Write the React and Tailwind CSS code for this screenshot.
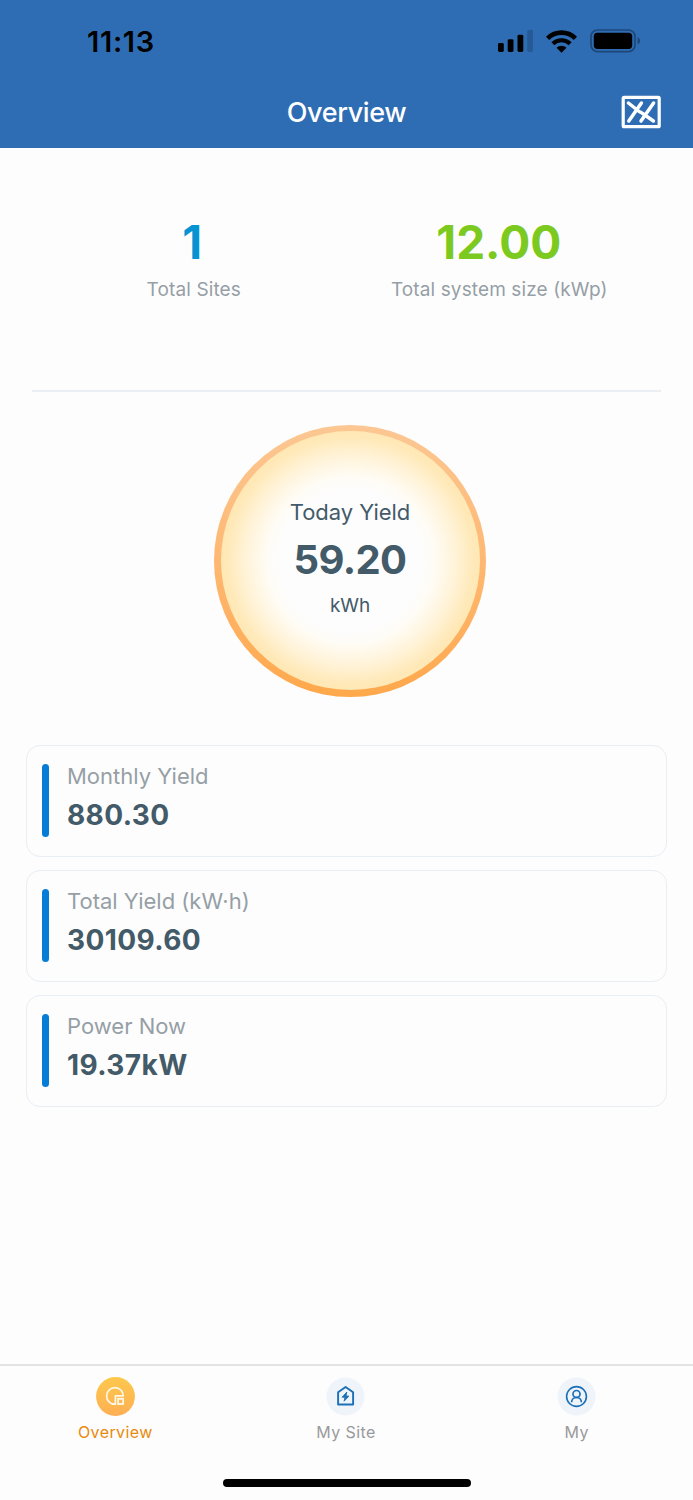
import React, { useState } from 'react';

const stats = [
  { id: 'sites', value: '1', label: 'Total Sites', valueClass: 'text-[#0593d3] -ml-[3px]' },
  { id: 'size', value: '12.00', label: 'Total system size (kWp)', valueClass: 'text-[#7cc91f] -ml-px' },
];

const yields = [
  { id: 'month', label: 'Monthly Yield', value: '880.30' },
  { id: 'total', label: 'Total Yield (kW·h)', value: '30109.60' },
  { id: 'power', label: 'Power Now', value: '19.37kW' },
];

function SignalIcon() {
  return (
    <svg width="35" height="22" viewBox="0 0 35 22">
      <rect x="0" y="13" width="5.8" height="9" rx="1.4" />
      <rect x="9.7" y="9.3" width="5.8" height="12.7" rx="1.4" />
      <rect x="19.5" y="4.8" width="5.8" height="17.2" rx="1.4" />
      <rect x="29.2" y="0" width="5.8" height="22" rx="1.4" fill="#255a96" />
    </svg>
  );
}

function WifiIcon() {
  return (
    <svg width="31" height="23" viewBox="0 0 31 23">
      <path d="M1.6 8.4a19.6 19.6 0 0 1 27.8 0" fill="none" stroke="#000" strokeWidth="4.6" />
      <path d="M6.9 13.8a12.2 12.2 0 0 1 17.2 0" fill="none" stroke="#000" strokeWidth="4.2" />
      <path d="M15.5 22.8l-5-5a7.1 7.1 0 0 1 10 0z" />
    </svg>
  );
}

function BatteryIcon() {
  return (
    <svg width="51" height="24" viewBox="0 0 51 24">
      <rect x="1" y="1" width="44" height="21.6" rx="6.6" fill="none" stroke="#1d4778" strokeWidth="1.7" />
      <rect x="3.8" y="3.7" width="38.4" height="16.2" rx="3.6" />
      <path d="M47.6 8.2c3.2 1.2 3.2 6 0 7.2z" fill="#1d4778" />
    </svg>
  );
}

function BoardIcon() {
  return (
    <svg width="40" height="34" viewBox="0 0 40 34" fill="none" stroke="#fff" strokeLinecap="round">
      <rect x="2.2" y="2.3" width="36" height="29.4" rx="1" strokeWidth="3.2" />
      <path d="M7.4 8L18.8 17M20 17.4L32.4 26M20.4 8L7.8 26M32.6 8L20 26" strokeWidth="3.5" />
    </svg>
  );
}

function OverviewIcon() {
  return (
    <svg width="39" height="39" viewBox="0 0 39 39" fill="none">
      <defs>
        <linearGradient id="tabFill" x1="0" y1="0" x2="0" y2="1">
          <stop offset="0" stopColor="#fdc84c" />
          <stop offset="1" stopColor="#feaf54" />
        </linearGradient>
      </defs>
      <circle cx="19.5" cy="19.5" r="19.4" fill="url(#tabFill)" />
      <path d="M18.9 27.2A8.3 8.3 0 1 1 27.2 18.8H19.4V27.2z" stroke="#fff8e7" strokeWidth="1.7" strokeLinejoin="round" />
      <rect x="22.1" y="21.8" width="5" height="5.2" stroke="#fff8e7" strokeWidth="1.8" />
    </svg>
  );
}

function SiteIcon() {
  return (
    <svg width="39" height="39" viewBox="0 0 39 39" fill="none">
      <circle cx="19.5" cy="19.5" r="19" fill="#eff3fa" />
      <path d="M12.1 15.3l7.5-5.4 7.5 5.4v12.2H12.1z" stroke="#1c70b8" strokeWidth="1.9" strokeLinejoin="round" />
      <path d="M20.8 15.1l-4.7 5.1h2.9l-.9 4 4.8-5.1h-2.9z" fill="#1c70b8" stroke="#1c70b8" strokeWidth=".9" />
    </svg>
  );
}

function UserIcon() {
  return (
    <svg width="39" height="39" viewBox="0 0 39 39" fill="none" stroke="#1c70b8">
      <circle cx="19.5" cy="19.5" r="19" fill="#eff3fa" stroke="none" />
      <circle cx="19.5" cy="19.5" r="9.9" strokeWidth="1.6" />
      <circle cx="19.5" cy="17" r="3.5" strokeWidth="1.7" />
      <path d="M14.6 25.2a4.9 4.9 0 0 1 9.8 0" strokeWidth="1.7" />
    </svg>
  );
}

const tabs = [
  { id: 'overview', label: 'Overview', icon: <OverviewIcon /> },
  { id: 'site', label: 'My Site', icon: <SiteIcon /> },
  { id: 'my', label: 'My', icon: <UserIcon /> },
];

export default function App() {
  const [activeTab, setActiveTab] = useState('overview');

  return (
    <div className="w-[693px] h-[1500px] flex flex-col bg-[#fdfdfd] overflow-hidden font-['Inter',sans-serif]">
      <header className="h-[148px] shrink-0 bg-[#2e6db4]">
        {/* Status bar */}
        <div className="h-[82px] pl-[87px] pr-[52px] flex items-center justify-between">
          <span className="text-[29px] leading-none tracking-[0.7px] font-semibold text-black">11:13</span>
          <div className="flex items-center gap-[13px]">
            <SignalIcon />
            <WifiIcon />
            <BatteryIcon />
          </div>
        </div>

        {/* Title bar */}
        <div className="h-[60px] px-8 grid grid-cols-[1fr_auto_1fr] items-center">
          <span></span>
          <h1 className="text-[27px] leading-none tracking-[-0.35px] font-medium text-white">Overview</h1>
          <button className="justify-self-end"><BoardIcon /></button>
        </div>
      </header>

      <main className="flex-1">
        {/* Totals */}
        <section className="h-[242px] px-[41px] pt-[69px] grid grid-cols-2">
          {stats.map(s => (
            <div key={s.id} className="flex flex-col items-center">
              <span className={`text-[46px] leading-[50px] font-bold ${s.valueClass}`}>{s.value}</span>
              <span className="mt-[11px] text-[19px] leading-6 tracking-[0.12px] whitespace-nowrap text-[#969fa6]">{s.label}</span>
            </div>
          ))}
        </section>
        <div className="h-[2px] mx-8 bg-[#ebeef3]"></div>

        {/* Today yield */}
        <section className="h-[353px] pt-[32.5px] pl-[7px] flex justify-center">
          <div className="w-[272px] h-[272px] rounded-full p-[6.5px] bg-linear-to-b from-[#fcc793] to-[#ffa84b]">
            <div className="h-full rounded-full flex flex-col items-center pt-[67px] text-[#435a68] bg-[radial-gradient(circle_closest-side,#fdfdfd_55%,#fffcf5_65%,#fff3d8_81%,#ffe9b9_95%,#ffe8b4_100%)]">
              <span className="text-[22px] leading-7 tracking-[-0.05px]">Today Yield</span>
              <span className="mt-[10px] text-[40px] leading-[48px] tracking-[-0.6px] font-bold">59.20</span>
              <span className="mt-[10px] text-[19px] leading-6 tracking-[-0.1px]">kWh</span>
            </div>
          </div>
        </section>

        {/* Yield cards */}
        <section className="px-[26px] flex flex-col gap-[13px]">
          {yields.map(y => (
            <div key={y.id} className="h-[112px] flex items-start pt-[18px] pl-[15px] rounded-[14px] border-[1.5px] border-[#e9edf4]">
              <div className="w-[7px] h-[73px] rounded-full bg-[#057cd5]"></div>
              <div className="ml-[18px] -mt-px flex flex-col">
                <span className="text-[22px] leading-[26px] text-[#969fa6]">{y.label}</span>
                <span className="mt-[8px] text-[28px] leading-[36px] tracking-[0.4px] font-bold text-[#435a68]">{y.value}</span>
              </div>
            </div>
          ))}
        </section>
      </main>

      <footer className="h-[136px] shrink-0 border-t-2 border-[#e3e3e4]">
        <nav className="h-[112px] pr-px grid grid-cols-3">
          {tabs.map(tab => (
            <button key={tab.id} onClick={() => setActiveTab(tab.id)} className="flex flex-col items-center pt-[11px]">
              {tab.icon}
              <span className={`mt-[6px] text-[16px] leading-5 tracking-[0.4px] ${activeTab === tab.id ? 'text-[#e88a0c]' : 'text-[#999a9c]'}`}>{tab.label}</span>
            </button>
          ))}
        </nav>
        {/* Home indicator */}
        <div className="w-[248px] h-[8px] mt-[0.5px] mx-auto rounded-full bg-black"></div>
      </footer>
    </div>
  );
}
